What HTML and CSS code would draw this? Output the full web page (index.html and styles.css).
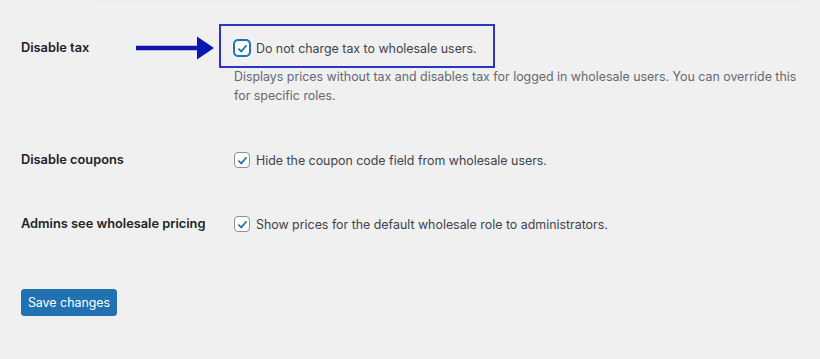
FILE: index.html
```html
<!DOCTYPE html>
<html>
<head>
<meta charset="utf-8">
<link rel="stylesheet" href="styles.css">
</head>
<body>
<div class="topline"></div>
<div class="form">
  <div class="row first">
    <div class="label">Disable tax</div>
    <div class="field">
      <svg class="arrow" width="80" height="26" viewBox="0 0 80 26"><path d="M0 10.8 H61 V1.5 L78 13 L61 24.5 V15.2 H0 Z" fill="#0d17b0"/></svg>
      <div class="highlight"></div>
      <label class="check"><span class="box focus"><svg viewBox="0 0 16 16" width="13" height="13"><path d="M3 8.2 L6.5 11.6 L13 4" fill="none" stroke="#2271b1" stroke-width="2.2"/></svg></span>Do not charge tax to wholesale users.</label>
      <p class="desc">Displays prices without tax and disables tax for logged in wholesale users. You can override this for specific roles.</p>
    </div>
  </div>
  <div class="row">
    <div class="label">Disable coupons</div>
    <div class="field">
      <label class="check"><span class="box"><svg viewBox="0 0 16 16" width="13" height="13"><path d="M3 8.2 L6.5 11.6 L13 4" fill="none" stroke="#2271b1" stroke-width="2.2"/></svg></span>Hide the coupon code field from wholesale users.</label>
    </div>
  </div>
  <div class="row">
    <div class="label">Admins see wholesale pricing</div>
    <div class="field">
      <label class="check"><span class="box"><svg viewBox="0 0 16 16" width="13" height="13"><path d="M3 8.2 L6.5 11.6 L13 4" fill="none" stroke="#2271b1" stroke-width="2.2"/></svg></span>Show prices for the default wholesale role to administrators.</label>
    </div>
  </div>
</div>
<div class="actions"><button class="save">Save changes</button></div>
</body>
</html>
```
FILE: styles.css
```css
html, body { margin: 0; padding: 0; }
body {
  background: #f0f0f1;
  font-family: "Inter", "Liberation Sans", sans-serif;
  font-size: 12.4px;
  color: #3c434a;
  width: 820px;
  height: 359px;
  overflow: hidden;
}
.topline {
  margin-left: 97px;
  width: 703px;
  height: 3px;
  background: #ededee;
}
.form { padding: 0 0 0 21px; }
.row {
  display: flex;
  padding: 20px 0;
}
.row.first { padding-top: 33px; padding-bottom: 23px; }
.label {
  width: 213px;
  flex: none;
  font-weight: 600;
  color: #1d2327;
  font-size: 12.8px;
  line-height: 24px;
}
.field { position: relative; flex: 1; }
.check {
  display: flex;
  align-items: center;
  height: 24px;
  font-size: 12.4px;
  color: #3c434a;
}
.box {
  width: 16px;
  height: 16px;
  box-sizing: border-box;
  border: 1px solid #8c8f94;
  border-radius: 4px;
  background: #fff;
  margin-right: 6px;
  display: flex;
  align-items: center;
  justify-content: center;
}
.box.focus {
  border: 1.5px solid #2271b1;
  box-shadow: 0 0 0 1px #2271b1;
  border-radius: 4px;
}
.desc {
  margin: 7px 0 0;
  color: #646970;
  font-size: 12.4px;
  line-height: 19px;
  width: 570px;
}
.highlight {
  position: absolute;
  left: -15px;
  top: -12px;
  width: 276px;
  height: 44px;
  box-sizing: border-box;
  border: 2px solid #2b35c4;
}
.arrow {
  position: absolute;
  left: -98px;
  top: -1px;
}
.actions { padding: 33px 0 0 21px; }
.save {
  background: #2271b1;
  color: #fff;
  border: 1px solid #2271b1;
  border-radius: 3px;
  font-family: inherit;
  font-size: 12.4px;
  height: 27px;
  width: 96px;
  padding: 0;
}
```
